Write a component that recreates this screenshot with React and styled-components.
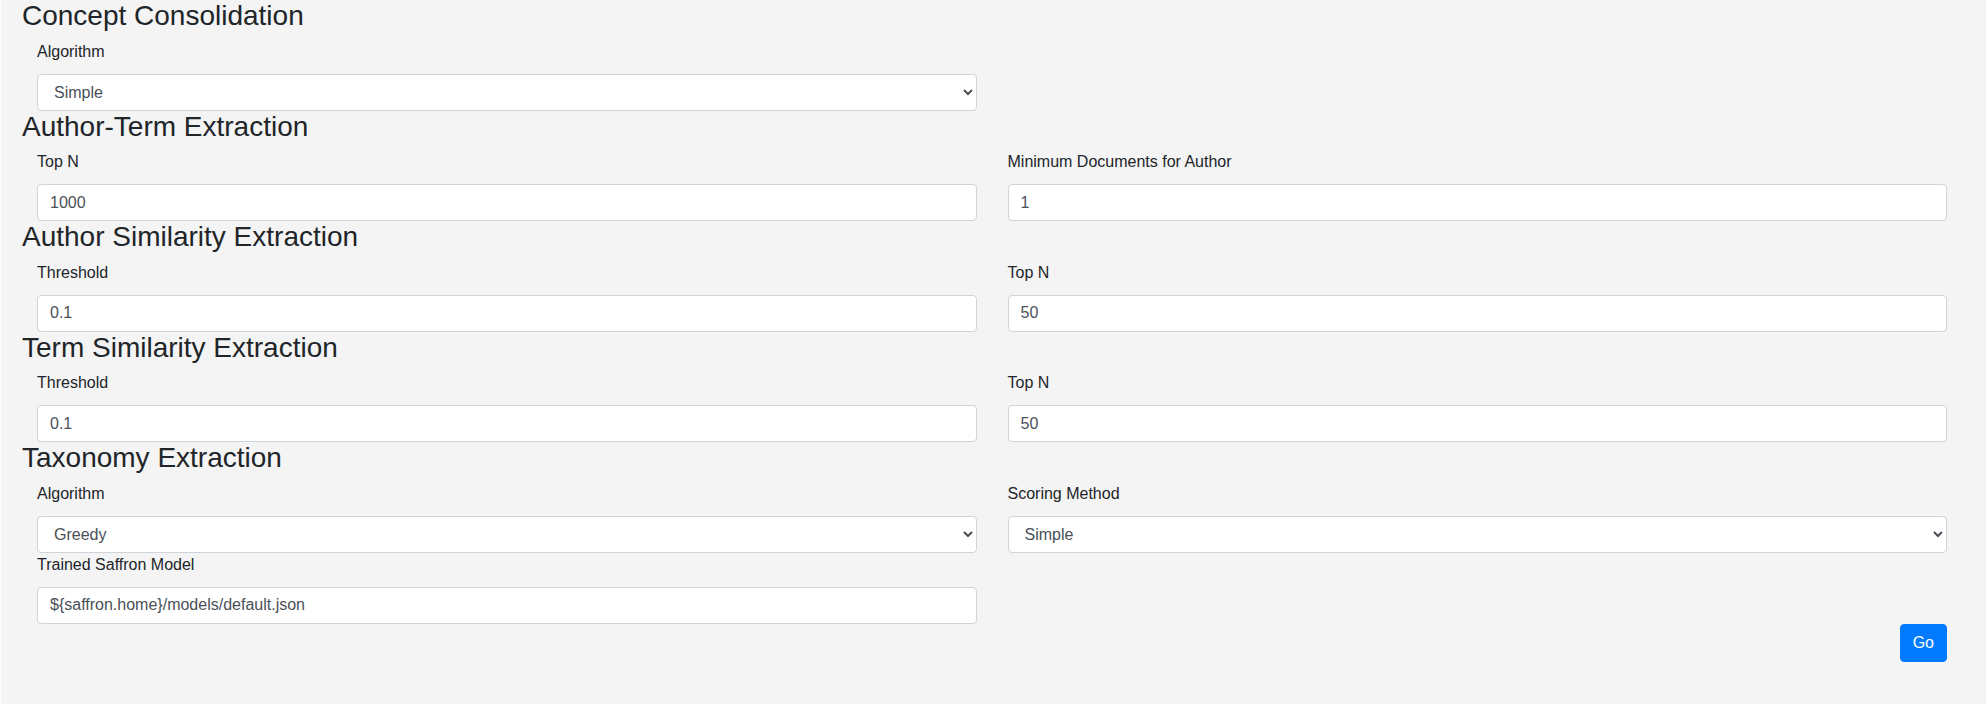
import React from "react";
import styled, { createGlobalStyle } from "styled-components";

const GlobalStyle = createGlobalStyle`
  html, body {
    margin: 0;
    padding: 0;
    background: #ffffff;
  }
  body {
    font-family: "Liberation Sans", Arial, sans-serif;
    color: #212529;
  }
`;

function App() {
  return (
    <>
      <GlobalStyle />
      <Panel>
        <Section>
          <Heading>Concept Consolidation</Heading>
          <Row>
            <Field>
              <Label>Algorithm</Label>
              <Select defaultValue="simple">
                <option value="simple">Simple</option>
              </Select>
            </Field>
          </Row>
        </Section>

        <Section>
          <Heading>Author-Term Extraction</Heading>
          <Row>
            <Field>
              <Label>Top N</Label>
              <Input defaultValue="1000" />
            </Field>
            <Field>
              <Label>Minimum Documents for Author</Label>
              <Input defaultValue="1" />
            </Field>
          </Row>
        </Section>

        <Section>
          <Heading>Author Similarity Extraction</Heading>
          <Row>
            <Field>
              <Label>Threshold</Label>
              <Input defaultValue="0.1" />
            </Field>
            <Field>
              <Label>Top N</Label>
              <Input defaultValue="50" />
            </Field>
          </Row>
        </Section>

        <Section>
          <Heading>Term Similarity Extraction</Heading>
          <Row>
            <Field>
              <Label>Threshold</Label>
              <Input defaultValue="0.1" />
            </Field>
            <Field>
              <Label>Top N</Label>
              <Input defaultValue="50" />
            </Field>
          </Row>
        </Section>

        <Section>
          <Heading>Taxonomy Extraction</Heading>
          <Row>
            <Field>
              <Label>Algorithm</Label>
              <Select defaultValue="greedy">
                <option value="greedy">Greedy</option>
              </Select>
            </Field>
            <Field>
              <Label>Scoring Method</Label>
              <Select defaultValue="simple">
                <option value="simple">Simple</option>
              </Select>
            </Field>
            <Field>
              <Label>Trained Saffron Model</Label>
              <Input defaultValue="${saffron.home}/models/default.json" />
            </Field>
          </Row>
        </Section>

        <Actions>
          <GoButton type="button">Go</GoButton>
        </Actions>
      </Panel>
    </>
  );
}

export default App;

const Panel = styled.div`
  margin-left: 1px;
  background: #f4f4f4;
  padding: 0 39px 42px 21px;
`;

const Section = styled.section`
  display: flex;
  flex-direction: column;
`;

const Heading = styled.h3`
  margin: -1px 0 7px 0;
  font-size: 28px;
  font-weight: 400;
  line-height: 1.2;
  color: #212529;
`;

const Row = styled.div`
  display: grid;
  grid-template-columns: 1fr 1fr;
  column-gap: 31px;
  padding-left: 15px;
`;

const Field = styled.div`
  display: flex;
  flex-direction: column;
`;

const Label = styled.label`
  display: block;
  font-size: 16px;
  line-height: 24px;
  margin-bottom: 10px;
  color: #212529;
`;

const controlStyles = `
  box-sizing: border-box;
  width: 100%;
  height: 37px;
  padding: 6px 12px;
  font-family: "Liberation Sans", Arial, sans-serif;
  font-size: 16px;
  line-height: 24px;
  color: #495057;
  background-color: #ffffff;
  border: 1px solid #ced4da;
  border-radius: 4px;
  outline: none;
`;

const Input = styled.input`
  ${controlStyles}
`;

const Select = styled.select`
  ${controlStyles}
`;

const Actions = styled.div`
  display: flex;
  justify-content: flex-end;
`;

const GoButton = styled.button`
  box-sizing: border-box;
  height: 38px;
  padding: 6px 12px;
  font-family: "Liberation Sans", Arial, sans-serif;
  font-size: 16px;
  line-height: 24px;
  color: #ffffff;
  background-color: #007bff;
  border: 1px solid #007bff;
  border-radius: 4px;
  cursor: pointer;
`;
